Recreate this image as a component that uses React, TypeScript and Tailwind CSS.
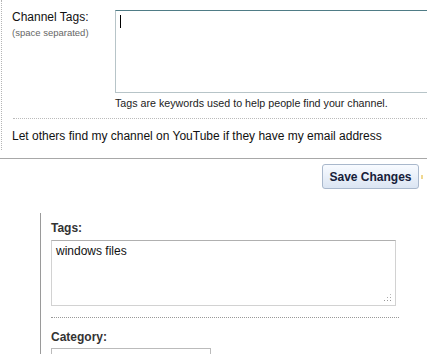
export default function App() {
  return (
    <div className="w-[427px] h-[354px] overflow-hidden bg-white text-black font-['Liberation_Sans',Arial,sans-serif]">
      {/* channel settings block */}
      <div className="h-[150px] ml-px border-l border-dotted border-[#b5b5b5]">
        <div className="flex pt-[10px]">
          <div className="w-[113px] pl-[10px] shrink-0">
            <div className="text-[12px] leading-[15px] text-[#111]">Channel Tags:</div>
            <div className="text-[9.5px] leading-[12px] text-[#666] mt-[2px]">(space separated)</div>
          </div>
          <div className="flex-1 -mr-[10px]">
            <div className="h-[83px] border border-[#b7c4c8] border-t-[#4f7c86] bg-white pl-[4px] pt-[4px]">
              <div className="w-px h-[13px] bg-black" />
            </div>
            <div className="text-[10.7px] leading-[13px] text-[#222] mt-[4px]">
              Tags are keywords used to help people find your channel.
            </div>
          </div>
        </div>
        <div className="ml-[11px] mt-[8px] border-t border-dotted border-[#bbb]" />
        <div className="pl-[10px] mt-[10px] text-[12px] leading-[15px] text-[#111]">
          Let others find my channel on YouTube if they have my email address
        </div>
      </div>

      <div className="mt-[8px] border-t border-[#a8a8a8]" />

      <div className="flex justify-end items-center pr-[4px] mt-[5px]">
        <button className="w-[97px] h-[25px] rounded-[3px] border border-[#a9b8cc] bg-gradient-to-b from-[#f8fbff] to-[#dbe5f3] text-[12px] font-bold text-[#16203a] leading-none">
          Save Changes
        </button>
        <div className="ml-[2px] w-[2px] h-[4px] bg-[#f0d890]" />
      </div>

      {/* video edit block */}
      <div className="ml-[40px] mt-[24px] border-l border-[#9a9a9a] pl-[10px] pt-[8px]">
        <div className="text-[12px] leading-[15px] font-bold text-[#333]">Tags:</div>
        <div className="relative mt-[4px] w-[345px] h-[66px] border border-[#d2d2d2] border-t-[#b0b0b0] pl-[4px] pt-[3px]">
          <div className="text-[12px] leading-[15px] text-[#111]">windows files</div>
          <svg className="absolute right-[3px] bottom-[3px]" width="8" height="8" viewBox="0 0 8 8">
            <rect x="6" y="0" width="1" height="1" fill="#bbb" />
            <rect x="3" y="3" width="1" height="1" fill="#aaa" />
            <rect x="6" y="3" width="1" height="1" fill="#aaa" />
            <rect x="0" y="6" width="1" height="1" fill="#999" />
            <rect x="3" y="6" width="1" height="1" fill="#999" />
            <rect x="6" y="6" width="1" height="1" fill="#999" />
          </svg>
        </div>
        <div className="mt-[11px] w-[348px] border-t border-dotted border-[#999]" />
        <div className="mt-[12px] text-[12px] leading-[15px] font-bold text-[#333]">Category:</div>
        <div className="mt-[3px] w-[160px] h-[20px] border border-[#bbb]" />
      </div>
    </div>
  );
}
